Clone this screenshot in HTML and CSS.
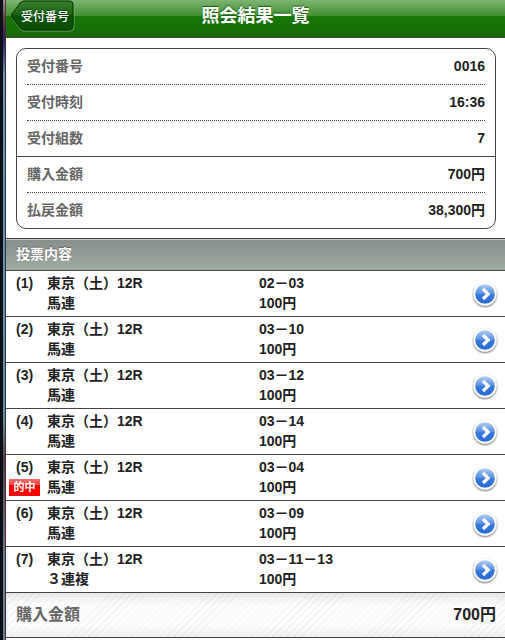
FILE: index.html
```html
<!DOCTYPE html>
<html lang="ja">
<head>
  <meta charset="UTF-8">
  <title>照会結果一覧</title>
  <link rel="stylesheet" href="styles.css">
</head>
<body>

  <header class="header">
    <button class="back-btn" type="button">
      <svg class="back-shape" width="64" height="32" viewBox="0 0 64 32" aria-hidden="true">
        <defs>
          <linearGradient id="backFill" x1="0" y1="0" x2="0" y2="1">
            <stop offset="0" stop-color="#3a7f31"/>
            <stop offset="0.5" stop-color="#1a600f"/>
            <stop offset="0.5" stop-color="#0b5200"/>
            <stop offset="1" stop-color="#0b5200"/>
          </linearGradient>
        </defs>
        <path d="M13 2H59Q63 2 63 6V27Q63 31 59 31H13Q11 31 9 29L2 19Q1 17 2 15L9 4Q11 2 13 2Z" fill="none" stroke="#6aa85f"/>
        <path d="M13 1H59Q62 1 62 5V26Q62 30 59 30H13Q11 30 9 28L1 17Q0 16 1 14L9 3Q11 1 13 1Z" fill="url(#backFill)" stroke="#043300"/>
      </svg>
      <span class="back-label">受付番号</span>
    </button>
    <h1>照会結果一覧</h1>
  </header>

  <main>
    <dl class="summary">
      <div class="summary-row"><dt>受付番号</dt><dd>0016</dd></div>
      <div class="summary-row"><dt>受付時刻</dt><dd>16:36</dd></div>
      <div class="summary-row"><dt>受付組数</dt><dd>7</dd></div>
      <div class="summary-row group-start"><dt>購入金額</dt><dd>700円</dd></div>
      <div class="summary-row"><dt>払戻金額</dt><dd>38,300円</dd></div>
    </dl>

    <h2>投票内容</h2>
    <ul class="bets" id="betsList"></ul>

    <div class="total">
      <span class="total-label">購入金額</span>
      <span>700円</span>
    </div>
  </main>

  <script src="script.js"></script>
</body>
</html>
```
FILE: styles.css
```css
* {
  box-sizing: border-box;
}
body {
  position: relative;
  min-height: 100vh;
  margin: 0;
  padding-left: 6px;
  background: #fff;
  color: #222;
  font-family: "Liberation Sans", "Noto Sans CJK JP", sans-serif;
  font-size: 14px;
  font-weight: bold;
  line-height: 20px;
}
/* window edge */
body::before {
  content: "";
  position: absolute;
  top: 0;
  bottom: 0;
  left: 0;
  width: 6px;
  background:
    linear-gradient(#53454a, #4b2528 25px, #3c2530 80px, #28343d 180px, #28343d 420px, #552328 460px, #552328) right / 1px 100% no-repeat,
    linear-gradient(#a09095, #644044 20px, #29206a 40px, #6c95b3 75px, #668d9e 420px, #514149 460px, #628199 560px, #628199) 3px 0 / 2px 100% no-repeat,
    #0d0f17;
}
.header {
  position: relative;
  display: flex;
  align-items: center;
  justify-content: center;
  height: 38px;
  padding-bottom: 6px;
  border-bottom: 1px solid #444;
  background: linear-gradient(#7db572, #3f8f31 16px, #187706 16px, #176907);
}
h1 {
  margin: 0;
  color: #fff;
  font-size: 18px;
  text-shadow: 0 -1px 1px #1c5c12;
}
.back-btn {
  position: absolute;
  top: 0;
  left: 5px;
  width: 64px;
  height: 32px;
  padding: 0 0 2px 4px;
  border: none;
  background: none;
  color: #fff;
  font: 500 12px "Liberation Sans", "Noto Sans CJK JP", sans-serif;
  text-shadow: 0 -1px 1px #063800;
  cursor: pointer;
}
.back-shape {
  position: absolute;
  top: 0;
  left: 0;
}
.back-label {
  position: relative;
}
.summary {
  margin: 10px 9px 9px 10px;
  border: 1px solid #444;
  border-radius: 10px;
}
.summary-row {
  display: flex;
  justify-content: space-between;
  margin: 0 10px;
  padding: 7px 0 8px;
  border-top: 1px dotted #444;
}
.summary-row:first-child {
  border-top: none;
}
.summary-row.group-start {
  margin: 0;
  padding-left: 10px;
  padding-right: 10px;
  border-top-style: solid;
}
dt {
  color: #666;
}
dd {
  margin: 0;
}
h2 {
  margin: 0;
  padding: 5px 10px;
  border-top: 1px solid #444;
  border-bottom: 1px solid #444;
  background: linear-gradient(#c4cac6 1px, #88908b 1px, #a0aba4);
  color: #fff;
  font-size: 14px;
  line-height: 21px;
  text-shadow: 0 -1px 1px #666;
}
.bets {
  margin: 0;
  padding: 0;
  list-style: none;
}
.bet {
  display: grid;
  grid-template-columns: 38px 212px 1fr 28px;
  align-items: center;
  padding: 2px 6px 3px 3px;
  border-bottom: 1px solid #444;
  color: #222;
  text-decoration: none;
}
.bet-no {
  padding-left: 7px;
}
.bet-type {
  grid-column: 2;
}
.bet-arrow {
  grid-area: 1 / 4 / 3 / 5;
  margin-top: 2px;
}
.hit {
  width: 31px;
  height: 17px;
  background: linear-gradient(#f97070, #fb4040 6px, #f00 6px);
  color: #fff;
  font-size: 11px;
  line-height: 17px;
  text-align: center;
}
.total {
  display: flex;
  justify-content: space-between;
  padding: 12px 9px 12px 10px;
  border-bottom: 1px solid #444;
  background:
    linear-gradient(rgba(0, 0, 0, 0.08), transparent 12px, transparent 32px, rgba(0, 0, 0, 0.05)),
    repeating-linear-gradient(135deg, #fdfdfd 0, #fdfdfd 4px, #f3f3f3 4px, #f3f3f3 5px);
  font-size: 16px;
}
.total-label {
  color: #666;
}
```
FILE: script.js
```javascript
const bets = [
  { type: "馬連", pick: "02－03" },
  { type: "馬連", pick: "03－10" },
  { type: "馬連", pick: "03－12" },
  { type: "馬連", pick: "03－14" },
  { type: "馬連", pick: "03－04", hit: true },
  { type: "馬連", pick: "03－09" },
  { type: "３連複", pick: "03－11－13" }
];

const arrow = `
  <svg class="bet-arrow" width="28" height="28" viewBox="0 0 28 28" aria-hidden="true">
    <defs>
      <linearGradient id="arrowFill" x1="0" y1="0" x2="0" y2="1">
        <stop offset="0" stop-color="#b4cdf3"/>
        <stop offset="0.5" stop-color="#548be0"/>
        <stop offset="0.5" stop-color="#397cdb"/>
        <stop offset="1" stop-color="#2869d5"/>
      </linearGradient>
      <filter id="arrowShadow" x="-20%" y="-20%" width="140%" height="150%">
        <feDropShadow dx="0" dy="1" stdDeviation="1" flood-color="#000" flood-opacity="0.7"/>
      </filter>
    </defs>
    <circle cx="14" cy="14" r="11.5" fill="#fff" filter="url(#arrowShadow)"/>
    <circle cx="14" cy="14" r="9.8" fill="url(#arrowFill)"/>
    <path d="M12 9L17.2 14L12 19" fill="none" stroke="#fff" stroke-width="3.2"/>
  </svg>`;

function displayBets(bets) {
  let betsList = document.getElementById("betsList");

  bets.forEach((bet, index) => {
    let li = document.createElement("li");
    li.innerHTML = `
      <a class="bet" href="#bet${index + 1}">
        <span class="bet-no">(${index + 1})</span>
        <span>東京（土）12R</span>
        <span>${bet.pick}</span>
        ${bet.hit ? '<span class="hit">的中</span>' : ""}
        <span class="bet-type">${bet.type}</span>
        <span>100円</span>
        ${arrow}
      </a>
    `;
    betsList.appendChild(li);
  });
}

displayBets(bets);
```
